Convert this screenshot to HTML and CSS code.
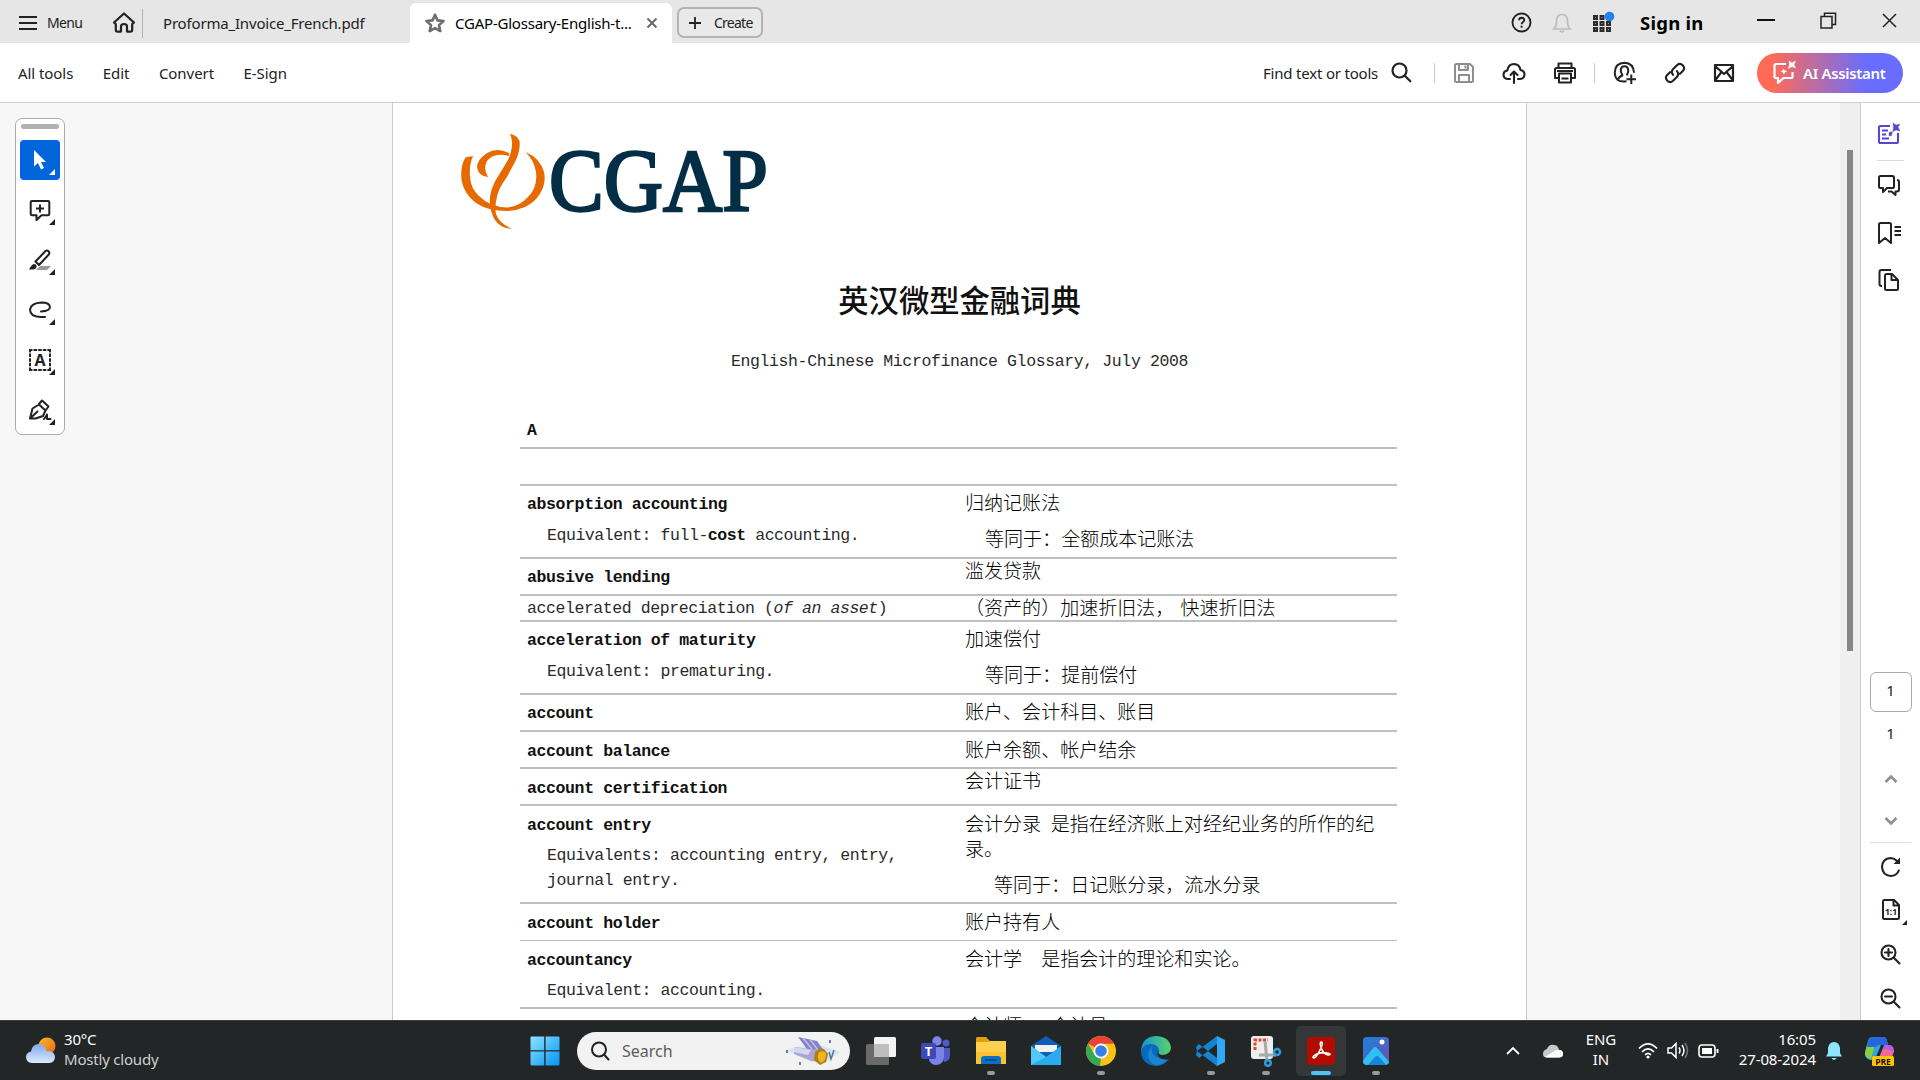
FILE: index.html
```html
<!DOCTYPE html>
<html lang="en">
<head>
<meta charset="utf-8">
<title>CGAP-Glossary-English-to-Chinese.pdf</title>
<link rel="stylesheet" href="styles.css">
</head>
<body>
<header class="tabbar">
  <div class="menu"><svg width="20" height="16" viewBox="0 0 20 16"><path d="M1 2h18M1 8h18M1 14h18" stroke="#222" stroke-width="2"/></svg><span>Menu</span></div>
  <svg class="home" width="24" height="21" viewBox="0 0 24 21" fill="none" stroke="#222" stroke-width="2.200" stroke-linejoin="round" stroke-linecap="round"><path d="M2 10.5 12 1.5l10 9-1.8 1.6V18q0 1.600-1.600 1.600H15v-5q0-2.600-3-2.600t-3 2.600v5H5.400q-1.600 0-1.600-1.600v-5.900z"/></svg>
  <div class="tab">Proforma_Invoice_French.pdf</div>
  <div class="tab tab-active">
    <svg width="20" height="20" viewBox="0 0 20 20" fill="none" stroke="#6e6e6e" stroke-width="2.600" stroke-linejoin="round"><path d="m10 1.800 2.500 5.600 6 .6-4.500 4.100 1.300 6L10 15.100l-5.300 3 1.300-6L1.500 8l6-.6z"/></svg>
    <span class="tab-name">CGAP-Glossary-English-t...</span>
    <svg width="12" height="12" viewBox="0 0 12 12" stroke="#6a6a6a" stroke-width="2.100"><path d="m1.500 1.500 9 9m0-9-9 9"/></svg>
  </div>
  <button class="create"><svg width="14" height="14" viewBox="0 0 14 14" stroke="#222" stroke-width="1.800"><path d="M7 1v12M1 7h12"/></svg><span>Create</span></button>
  <div class="account">
    <svg width="21" height="21" viewBox="0 0 21 21" fill="none" stroke="#222" stroke-width="1.900"><circle cx="10.500" cy="10.500" r="9"/><path d="M8 8.300q.2-2.600 2.700-2.600 2.500.1 2.500 2.300 0 1.400-1.500 2.300-1 .7-1 1.900M10.600 13.800v2"/></svg>
    <svg width="20" height="22" viewBox="0 0 20 22" fill="none" stroke="#bcbcbc" stroke-width="1.700"><path d="M2 17q2.500-2.500 2.500-8 0-6.500 5.500-6.500T15.500 9q0 5.500 2.500 8zM8 18.500q2 2.600 4 0"/></svg>
    <svg width="23" height="23" viewBox="0 0 23 23" fill="#999" stroke="#2b2b2b" stroke-width="2"><path d="M2 5h3v3H2zM8.500 5h3v3h-3zM15 5h3v3h-3zM2 11h3v3H2zM8.500 11h3v3h-3zM15 11h3v3h-3zM2 17h3v3H2zM8.500 17h3v3h-3zM15 17h3v3h-3z"/><circle cx="17.500" cy="5.500" r="4.800" fill="#2680eb" stroke="none"/></svg>
    <strong>Sign in</strong>
  </div>
  <div class="window-controls">
    <svg width="18" height="18" viewBox="0 0 18 18" stroke="#111" stroke-width="2"><path d="M0 9h18"/></svg>
    <svg width="17" height="17" viewBox="0 0 17 17" fill="none" stroke="#222" stroke-width="1.500"><path d="M1 4.500h11v11.500H1zM4.500 4V1.200h11v11.300H12.500"/></svg>
    <svg width="15" height="15" viewBox="0 0 15 15" stroke="#222" stroke-width="1.500"><path d="m1 1 13 13M14 1 1 14"/></svg>
  </div>
</header>

<nav class="toolbar">
  <div class="commands"><span>All tools</span><span>Edit</span><span>Convert</span><span>E-Sign</span></div>
  <div class="find"><span>Find text or tools</span>
    <svg width="21" height="21" viewBox="0 0 21 21" fill="none" stroke="#222" stroke-width="2.200" stroke-linecap="round"><circle cx="8.500" cy="8.500" r="7"/><path d="m13.800 13.800 5.500 5.500"/></svg></div>
  <div class="actions">
    <svg width="22" height="22" viewBox="0 0 22 22" fill="none" stroke="#8e8e8e" stroke-width="2" stroke-linejoin="round"><path d="M2 3.500Q2 2 3.500 2H17l3 3v13.500q0 1.500-1.500 1.500h-15Q2 20 2 18.500zM6 2v6h9V2M6 20v-7h10v7M12.500 3.500v3"/></svg>
    <svg width="24" height="24" viewBox="0 0 24 24" fill="none" stroke="#222" stroke-width="2.100" stroke-linecap="round" stroke-linejoin="round"><path d="M8 18H5.500Q1.500 17.500 1.500 13.500 1.700 10 5.300 9.500 6.500 3 12 3q5.500.2 6.500 6 4 .7 4 4.500-.3 4.200-4.500 4.500h-2M12 22V11M8.500 14 12 10.500l3.500 3.500"/></svg>
    <svg width="24" height="22" viewBox="0 0 24 22" fill="none" stroke="#222" stroke-width="2" stroke-linejoin="round"><path d="M5.500 6V1.500h13V6M5.500 16H2V7.500Q2 6 3.500 6h17Q22 6 22 7.500V16h-3.500M6 11.500h12v9H6zM4 9h16M8.500 16.500h7"/></svg>
  </div>
  <div class="actions share">
    <svg width="24" height="24" viewBox="0 0 24 24" fill="none" stroke="#222" stroke-width="2"><path d="M13.500 20.300Q2 22 1.800 11.500 2.200 2 11.500 1.700q9 .3 9.500 10M5.500 18q.5-2.500 3.500-3.200.8-.8 0-1.500Q7.500 11 7.800 8.500 8.500 5.300 11.500 5.300t3.700 3.200q.3 2.500-1 4.800v1.200M18.300 13.500v9.500M13.500 18.300H23"/></svg>
    <svg width="22" height="22" viewBox="0 0 22 22" fill="none" stroke="#222" stroke-width="2.100" stroke-linecap="round"><path d="M9 12.800Q6.600 9.600 9.200 7l4-4q2.800-2.300 5.500.3 2.600 2.700.3 5.500l-3 3M13 9.200q2.400 3.200-.2 5.800l-4 4q-2.800 2.300-5.500-.3-2.600-2.700-.3-5.500l3-3"/></svg>
    <svg width="22" height="20" viewBox="0 0 22 20" fill="none" stroke="#222" stroke-width="2.200" stroke-linejoin="round"><path d="M2 2h18v16H2zM2 3l9 8 9-8M2 17.500 8.500 9M20 17.500 13.500 9"/></svg>
  </div>
  <button class="assistant"><svg width="25" height="25" viewBox="0 0 25 25" fill="none" stroke="#fff" stroke-width="2.200" stroke-linejoin="round"><path d="M14 4H4Q2.500 4 2.500 5.500v11Q2.500 18 4 18h2v5l5.500-5H19q1.500 0 1.500-1.500V12"/><path d="m17 1 3 2 3.500-2-1.500 3.500 1.500 3.500-3.500-1.500-3.500 2 1-4zM11.500 9l1.200 1.700 2 .5-1.800 1-1 1.800-.9-1.800-2-.8 1.800-.7z" fill="#fff" stroke-width=".5"/></svg><span>AI Assistant</span></button>
</nav>

<main class="workspace">
  <div class="canvas-left">
    <div class="palette">
      <i class="handle"></i>
      <div class="tool selected"><svg width="16" height="22" viewBox="0 0 16 22" fill="#fff"><path d="M2 1v16.500l4-3.500 3 6.500 3-1.500-3-6h5z"/></svg></div>
      <div class="tool"><svg width="22" height="23" viewBox="0 0 22 23" fill="none" stroke="#222" stroke-width="2" stroke-linejoin="round"><path d="M3 2h16q1.300 0 1.300 1.300V15q0 1.300-1.300 1.300h-6.500L7.500 21v-4.700H3Q1.700 16.300 1.700 15V3.300Q1.700 2 3 2zM11 5.500v8M7 9.500h8"/></svg></div>
      <div class="tool"><svg width="24" height="22" viewBox="0 0 24 22" fill="none" stroke="#222" stroke-width="2" stroke-linejoin="round"><path d="M12 17h11l-4 4H8z" fill="#999" stroke="none"/><path d="M7.500 12.500 17.500 2q1.500-1 3 .3t.3 3.200L11 16z"/><path d="M6 15q3 .3 2.500 3-.5 2-3 2.500H1q2.500-5 5-5.500z" fill="#222" stroke="none"/></svg></div>
      <div class="tool"><svg width="24" height="20" viewBox="0 0 24 20" fill="none" stroke="#222" stroke-width="2" stroke-linecap="round"><path d="M13 11.500q9-.5 9-4.500-.5-4.500-8.500-4.500Q3 3 2 9.500q0 7 10.500 7.500h4.500"/></svg></div>
      <div class="tool"><svg width="24" height="24" viewBox="0 0 24 24"><path d="M1 2h22M1 22h22M2 1v22M22 1v22" stroke="#222" stroke-width="2" stroke-dasharray="3.500 1.100"/><text x="12" y="17.500" text-anchor="middle" class="type-glyph">A</text></svg></div>
      <div class="tool"><svg width="24" height="22" viewBox="0 0 24 22" fill="none" stroke="#222" stroke-width="2" stroke-linejoin="round" stroke-linecap="round"><path d="M2 19.500 4.500 9.500 11 5.500l6.500 6-2.500 5.500-7.500 2.500zM11 5l3-3.500 6.500 6-3 4M2.500 19l7-6.500M16 20q3-4 3-4.500V20h3.500"/></svg></div>
    </div>
  </div>

  <article class="page">
    <svg class="logo" width="320" height="125" viewBox="0 -10 320 125">
      <g fill="#e66a00">
        <path d="M55 4Q62 5 64.500 11 65.500 20 61 30L52 47Q43 59 42 67 39.500 76 41 84 44 93 57 99 45 98 40 90 34 80 35 67 36 58 42 48L53 30Q60 14 55 4z"/>
        <path d="M18 26 10.500 27.500Q5 36 6.500 50 9 64 21 73 33 81 52 81 72 80 82 68 92 56 89 42 85 28 70.500 22 79 30 81 42 83 57 73 67 64 77 52 77.500 35 77 24 66 16 59 15 47 14 35 18 26z"/>
        <path d="M54 23Q42 17 32 23 22 30 22 37 23 46 33 47 28 38 32 31 39 22 54 26z"/>
      </g>
      <text x="94" y="79.500" class="logo-text" textLength="219" lengthAdjust="spacingAndGlyphs">CGAP</text>
    </svg>
    <h1 lang="zh-CN">英汉微型金融词典</h1>
    <p class="subtitle">English-Chinese Microfinance Glossary, July 2008</p>
    <h2>A</h2>
    <div class="glossary">
      <div class="row blank"></div>
      <div class="row noted"><div class="en"><b>absorption accounting</b><p>Equivalent: full-<b>cost</b> accounting.</p></div><div class="zh" lang="zh-CN">归纳记账法<p>等同于：全额成本记账法</p></div></div>
      <div class="row raised"><div class="en"><b>abusive lending</b></div><div class="zh" lang="zh-CN">滥发贷款</div></div>
      <div class="row slim"><div class="en">accelerated depreciation (<em>of an asset</em>)</div><div class="zh" lang="zh-CN">（资产的）加速折旧法，<span class="half"> </span>快速折旧法</div></div>
      <div class="row noted"><div class="en"><b>acceleration of maturity</b><p>Equivalent: prematuring.</p></div><div class="zh" lang="zh-CN">加速偿付<p>等同于：提前偿付</p></div></div>
      <div class="row"><div class="en"><b>account</b></div><div class="zh" lang="zh-CN">账户、会计科目、账目</div></div>
      <div class="row low"><div class="en"><b>account balance</b></div><div class="zh" lang="zh-CN">账户余额、帐户结余</div></div>
      <div class="row low raised"><div class="en"><b>account certification</b></div><div class="zh" lang="zh-CN">会计证书</div></div>
      <div class="row low long"><div class="en"><b>account entry</b><p>Equivalents: accounting entry, entry,<br>journal entry.</p></div><div class="zh" lang="zh-CN">会计分录&ensp;是指在经济账上对经纪业务的所作的纪<br>录。<p>等同于：日记账分录，流水分录</p></div></div>
      <div class="row low thin"><div class="en"><b>account holder</b></div><div class="zh" lang="zh-CN">账户持有人</div></div>
      <div class="row low short"><div class="en"><b>accountancy</b><p>Equivalent: accounting.</p></div><div class="zh" lang="zh-CN">会计学&emsp;是指会计的理论和实论。</div></div>
      <div class="row"><div class="en"></div><div class="zh" lang="zh-CN">会计师&emsp;&ensp;会计员</div></div>
    </div>
  </article>

  <div class="canvas-right"></div>
  <div class="scroll"><i></i></div>

  <aside class="side">
    <div class="panels">
      <svg width="24" height="24" viewBox="0 0 24 24" fill="none" stroke="#5548ce" stroke-width="2.100" stroke-linejoin="round"><path d="M13 4H3.500Q2 4 2 5.500v14Q2 21 3.500 21h16q1.500 0 1.500-1.500V11M5 8.500h6M5 12.500h4M5 16.500h7"/><path d="m16 1 3 2 4-1-2 3 2 4-4-1-3 1.500.5-4zM12 10.500l3.500-1-1 4-2.500.5z" fill="#5548ce" stroke-width=".4"/></svg>
      <hr>
      <svg width="24" height="24" viewBox="0 0 24 24" fill="none" stroke="#222" stroke-width="2" stroke-linejoin="round"><path d="M3.500 2h12Q17 2 17 3.500v9q0 1.500-1.500 1.500H10l-4 4v-4H3.500Q2 14 2 12.500v-9Q2 2 3.500 2zM20 6q2 0 2 2v7.500q0 2-2 2h-1.500V21l-4-3.500H11"/></svg>
      <svg width="24" height="24" viewBox="0 0 24 24" fill="none" stroke="#222" stroke-width="2" stroke-linejoin="round"><path d="M3.500 2h9Q14 2 14 3.500V22l-6-5-6 5V3.500Q2 2 3.500 2zM17.500 6H24M17.500 10H24M17.500 14H24"/></svg>
      <svg width="24" height="24" viewBox="0 0 24 24" fill="none" stroke="#222" stroke-width="2" stroke-linejoin="round"><path d="M9.500 6H15l6 6v8.500q0 1.500-1.500 1.500h-10Q8 22 8 20.500v-13Q8 6 9.500 6zM14.500 6v6H21M5 18H4.500Q2.500 18 2.500 16V4Q2.500 2 4.500 2H14"/></svg>
    </div>
    <div class="paging">
      <span class="page-current">1</span>
      <span class="page-total">1</span>
      <svg width="14" height="10" viewBox="0 0 14 10" fill="none" stroke="#909090" stroke-width="2.600"><path d="M1.500 8 7 2.500 12.500 8"/></svg>
      <svg width="14" height="10" viewBox="0 0 14 10" fill="none" stroke="#909090" stroke-width="2.600"><path d="M1.500 2 7 7.500 12.500 2"/></svg>
      <hr>
      <svg width="22" height="22" viewBox="0 0 22 22" fill="none" stroke="#222" stroke-width="2.100" stroke-linecap="round"><path d="M17 5Q14.500 2.200 10.500 2 2.500 2.500 2 11q.5 8 8.500 9 6.500-.3 8.300-5.500"/><path d="M20 1.500V8h-6.500z" fill="#222" stroke="none"/></svg>
      <div class="fit"><svg width="20" height="22" viewBox="0 0 20 22" fill="none" stroke="#222" stroke-width="2" stroke-linejoin="round"><path d="M3.500 2H13l5 5v12.500q0 1.500-1.500 1.500h-13Q2 21 2 19.500v-16Q2 2 3.500 2zM12.500 2v5.500H18"/><text x="10" y="17" text-anchor="middle" class="fit-glyph">1:1</text></svg></div>
      <svg width="21" height="21" viewBox="0 0 21 21" fill="none" stroke="#222" stroke-width="2.100" stroke-linecap="round"><circle cx="8.500" cy="8.500" r="7"/><path d="m13.800 13.800 5.700 5.700M5 8.500h7M8.500 5v7"/></svg>
      <svg width="21" height="21" viewBox="0 0 21 21" fill="none" stroke="#222" stroke-width="2.100" stroke-linecap="round"><circle cx="8.500" cy="8.500" r="7"/><path d="m13.800 13.800 5.700 5.700M5 8.500h7"/></svg>
    </div>
  </aside>
</main>

<footer class="taskbar">
  <div class="weather">
    <svg width="31" height="27" viewBox="0 0 31 27"><defs><linearGradient id="sun" x1="0" y1="0" x2="1" y2="1"><stop stop-color="#fbb72c"/><stop offset="1" stop-color="#ee6515"/></linearGradient><linearGradient id="cloud" x1="0" y1="0" x2="0" y2="1"><stop stop-color="#7fa9ee"/><stop offset="1" stop-color="#dbe9fb"/></linearGradient></defs><circle cx="22" cy="9" r="8.500" fill="url(#sun)"/><path d="M7 26q-6-.5-6-6 0-4.500 5-5.500Q7 7 14 7q6.500.5 7.500 7.500 8-1 8.500 5.500 0 5.500-6 6z" fill="url(#cloud)"/></svg>
    <div class="forecast"><div>30°C</div><div class="dim">Mostly cloudy</div></div>
  </div>
  <svg class="start" width="30" height="30" viewBox="0 0 30 30"><defs><linearGradient id="win" x1="0" y1="0" x2="1" y2="1"><stop stop-color="#8be4ff"/><stop offset="1" stop-color="#0594f5"/></linearGradient></defs><path d="M1.500.5H14.200v13.700H.5V1.500q0-1 1-1zM15.600.5h12.900q1 0 1 1v12.700H15.600zM.5 15.600h13.700v13.900H1.500q-1 0-1-1zM15.600 15.600h13.900v12.900q0 1-1 1H15.600z" fill="url(#win)"/></svg>
  <div class="search">
    <svg width="20" height="20" viewBox="0 0 20 20" fill="none" stroke="#222" stroke-width="2" stroke-linecap="round"><circle cx="9" cy="8.500" r="7"/><path d="m14 13.500 4.500 5"/></svg>
    <span>Search</span>
    <svg width="58" height="30" viewBox="0 0 58 30"><path d="m0 15 10-4 25-2 20 7-12 9-20-3z" fill="#d2e6f4"/><path d="m13 1 19 4 7 10-17-2z" fill="#8583c4"/><path d="m18 2 9 11M25 3.500 33 14" stroke="#c0bfe6" stroke-width="1.500"/><path d="m9 11 24 3 6 5-5 7-8-1-17-7z" fill="#aaa7d4"/><path d="m9 11 17 3-3 5-14-3z" fill="#d8d5ee"/><path d="M30 16q4-4 9-3l4 5-2 8-6 3-6-5z" fill="#b27d12"/><path d="M34 16q6-2 7 2 0 7-5 9-5-4-2-11z" fill="#eeb721"/><path d="m44 16 2 7 3-9" fill="none" stroke="#5e7393" stroke-width="1.500"/><path d="M2 14v3M45 4v3M15 26v3" stroke="#6682ab" stroke-width="2"/></svg>
  </div>
  <div class="apps">
    <div class="app"><svg width="32" height="30" viewBox="0 0 32 30"><rect x="9" y="1" width="22" height="20" rx="1.500" fill="#f3f3f3"/><rect x="1" y="8" width="23" height="21" rx="1.500" fill="#777" opacity=".85"/><path d="M9 8h15v13H9z" fill="#bebebe"/></svg></div>
    <div class="app"><svg width="32" height="30" viewBox="0 0 32 30"><circle cx="17" cy="5" r="4.700" fill="#7d84ee"/><circle cx="26" cy="7" r="3.500" fill="#5059c9"/><path d="M20 12h10v8q0 5-6 6z" fill="#5059c9"/><path d="M10 11h14v10q-1 8-8 8-5 0-7-5z" fill="#7b83eb"/><rect x="1" y="7" width="15" height="16" rx="2" fill="#4048b4"/><text x="8.500" y="19.500" text-anchor="middle" class="teams-glyph">T</text></svg></div>
    <div class="app run"><svg width="32" height="30" viewBox="0 0 32 30"><path d="M2 1h9l4 4h15v10H1V2z" fill="#e0a20c"/><path d="M1 6h12l3-1h15v23H1z" fill="#ffd04c"/><path d="M1 16h30v12H1z" fill="#fbc32f"/><path d="M6 28v-5q0-3 3-3h14q3 0 3 3v5z" fill="#0873c5"/><path d="M10 24h12" stroke="#063b6c" stroke-width="1.500"/></svg></div>
    <div class="app"><svg width="32" height="30" viewBox="0 0 32 30"><path d="M1 10 16 0l15 10-15 12z" fill="#0b5fb5"/><path d="M5 9h22v7H5z" fill="#f1f1f1"/><path d="m1 10 15 11L31 10v19H1z" fill="#2aabf0"/><path d="m1 10 15 11L1 29z" fill="#52c7fa"/></svg></div>
    <div class="app run"><svg width="32" height="32" viewBox="0 0 32 32"><circle cx="16" cy="16" r="15" fill="#fbc116"/><path d="M16 16 3 8.500A15 15 0 0 1 29 8.500L16 9z" fill="#ea4335"/><path d="M3 8.500 9.500 20 16 23l-1 8A15 15 0 0 1 3 8.500z" fill="#34a853"/><circle cx="16" cy="16" r="7.500" fill="#fff"/><circle cx="16" cy="16" r="5.800" fill="#397ee8"/></svg></div>
    <div class="app"><svg width="32" height="32" viewBox="0 0 32 32"><defs><linearGradient id="edge" x1="0" y1="0" x2="1" y2="0"><stop stop-color="#1595d7"/><stop offset="1" stop-color="#59d368"/></linearGradient></defs><path d="M1 18Q1 1 17 1q13 1 14 12-1 7-9 7-5-1-3-4-2-6-9-5-7 1-9 7z" fill="url(#edge)"/><path d="M1 17Q3 8 12 9q6 1 7 6-3 4 0 7 4 4 10 2-5 7-13 7Q2 30 1 17z" fill="#0b69bd"/><path d="M12 11q-3 12 15 14-7 7-14 4-9-7-1-18z" fill="#1b85d0"/></svg></div>
    <div class="app run"><svg width="32" height="32" viewBox="0 0 32 32"><path d="M22 1v8L4 23l-3-3 1-4zM22 31v-8L4 9l-3 3 1 4z" fill="#1583cd"/><path d="m22 1 8 4v22l-8 4z" fill="#31a9f2"/></svg></div>
    <div class="app run"><svg width="32" height="32" viewBox="0 0 32 32"><rect x="1" y="1" width="22" height="23" rx="3" fill="#eee"/><path d="M5 15V5h13" fill="none" stroke="#dd4b2a" stroke-width="3" stroke-dasharray="3 1.500"/><path d="m15 6 2 20M9 20h17" stroke="#a9a9a9" stroke-width="3"/><circle cx="27" cy="17" r="3" fill="none" stroke="#2c9ede" stroke-width="2.500"/><circle cx="18" cy="28" r="2.800" fill="none" stroke="#2c9ede" stroke-width="2.500"/></svg></div>
    <div class="app run active"><svg width="28" height="28" viewBox="0 0 28 28"><rect width="28" height="28" rx="4" fill="#b30b00"/><path d="M14 5q3 0-1 8-4 8-6 8-3-1 3-4 6-2 10-1 5 1 2 2-4 0-7-5-3-7-1-8z" fill="none" stroke="#fff" stroke-width="1.600"/></svg></div>
    <div class="app run"><svg width="28" height="28" viewBox="0 0 28 28"><defs><linearGradient id="photo" x1="0" y1="0" x2="1" y2="1"><stop stop-color="#1685df"/><stop offset="1" stop-color="#744bac"/></linearGradient><clipPath id="photo-frame"><rect x="1" width="26" height="28" rx="4"/></clipPath></defs><g clip-path="url(#photo-frame)"><path d="M0 0h28v28H0z" fill="url(#photo)"/><path d="m0 25 11-14q2-2 4 0l13 15v4H0z" fill="#31bff1"/><path d="m6 28 7-8q2-2 4 0l8 9z" fill="#1684dd"/></g><circle cx="20" cy="5" r="2.500" fill="#fff"/></svg></div>
  </div>
  <div class="tray">
    <svg class="up" width="14" height="9" viewBox="0 0 14 9" fill="none" stroke="#fff" stroke-width="1.800"><path d="m1 8 6-6 6 6"/></svg>
    <svg class="onedrive" width="22" height="14" viewBox="0 0 22 14"><path d="M1 10Q1 6 5 5q2-5 7-4 4 0 5 5 4 0 4 4 0 3-4 3.500H5Q1 13.500 1 10z" fill="#c8c8c8"/><path d="m3 13 11-7q7-1 7 4 0 3.500-4 3.500H5z" fill="#fff"/></svg>
    <div class="language">ENG<br>IN</div>
    <svg class="wifi" width="20" height="17" viewBox="0 0 20 17" fill="none" stroke="#fff" stroke-width="1.700"><path d="M1 6.500q9-9 18 0M4 9.800q6-6 12 0M7 12.800q3-3 6 0"/><circle cx="10" cy="15" r="1.600" fill="#fff" stroke="none"/></svg>
    <svg class="volume" width="22" height="17" viewBox="0 0 22 17" fill="none" stroke="#fff" stroke-width="1.500"><path d="M1 6v5h3.500L9 15.500v-14L4.500 6zM12 5.500q2 3 0 6M15 3q4 5.500 0 11"/><path d="M18 1q5 7.500 0 15" stroke="#777"/></svg>
    <svg class="battery" width="21" height="14" viewBox="0 0 21 14" fill="none" stroke="#fff" stroke-width="1.600"><rect x="1" y="1" width="16" height="12" rx="3"/><rect x="4" y="4" width="10" height="6" fill="#fff" stroke="none"/><path d="M19.500 5v4" stroke-width="2"/></svg>
    <div class="clock">16:05<br>27-08-2024</div>
    <svg class="bell" width="18" height="20" viewBox="0 0 18 20" fill="#8ce5fb"><path d="M1 15.500 3 12V7q1-6 6-6t6 6v5l2 3.500zM6.500 17h5q-2.500 4-5 0z"/></svg>
    <svg class="copilot" width="31" height="30" viewBox="0 0 31 30"><path d="M9 1h11q2 0 3 4l1 4h-7l-5 12-2 3H6Q0 22 1 16L4 5q1-4 5-4z" fill="#29a4df"/><path d="M3 9h8L7 23q-6-1-6-6z" fill="#8bce45"/><path d="M9 1h11q2 0 3 4l1 4h-9l-4 2H3l2-7q1-3 4-3z" fill="#2667df"/><path d="M20 9h6q4 1 4 6l-2 7H15z" fill="#b35fe0"/><path d="m19 13-4 9h12l3-7z" fill="#f26a94"/><rect x="8" y="20" width="22" height="10" rx="1.500" fill="#ffc400"/><text x="19" y="28.500" text-anchor="middle" class="pre-glyph">PRE</text></svg>
  </div>
</footer>
</body>
</html>
```
FILE: styles.css
```css
* { box-sizing: border-box; }
body { margin: 0; width: 1920px; height: 1080px; overflow: hidden; display: flex; flex-direction: column; font-family: "Noto Sans", "Open Sans", sans-serif; font-size: 15px; color: #222; background: #fff; }
svg { display: block; flex: none; }
button { font: inherit; padding: 0; }
span, strong { white-space: nowrap; }
h1, h2, p, hr { margin: 0; }

.tabbar { height: 43px; flex: none; display: flex; align-items: center; background: #e6e6e6; }
.menu { width: 112px; padding: 2px 0 0 18px; display: flex; align-items: center; gap: 9px; font-size: 14px; letter-spacing: -.7px; }
.home { margin-top: 2px; }
.tab { width: 268px; height: 29px; margin: 4px 0 0 6px; padding-left: 20px; border-left: 1px solid #b1b1b1; line-height: 28px; font-size: 15px; letter-spacing: -.18px; }
.tab-active { width: 262px; height: 40px; margin: 3px 0 0; padding: 0 14px 0 15px; border: 0; border-radius: 6px 6px 0 0; background: #fff; color: #000; display: flex; align-items: center; line-height: 40px; letter-spacing: -.22px; }
.tab-name { margin: 0 auto 1px 10px; }
.create { width: 86px; height: 31px; margin: 2px 0 0 5px; border: 2px solid #b3b3b3; border-radius: 7px; background: #e9e9e9; color: #222; display: flex; align-items: center; padding-left: 9px; gap: 12px; font-size: 14px; letter-spacing: -.75px; }
.account { margin: 2px 0 0 748px; display: flex; align-items: center; gap: 20px; }
.account strong { font-size: 18.500px; font-weight: 700; color: #000; width: 64px; margin: 0 0 0 5px; letter-spacing: .25px; }
.window-controls { display: flex; align-items: center; margin: 0 23px 3px auto; gap: 45px; }

.toolbar { height: 60px; flex: none; border-bottom: 1px solid #cfcfcf; display: flex; align-items: center; padding-left: 18px; }
.commands { display: flex; gap: 29.500px; width: 1245px; letter-spacing: -.06px; }
.find { width: 171px; display: flex; align-items: center; gap: 13px; letter-spacing: -.2px; }
.actions { height: 20px; border-left: 1px solid #ccc; display: flex; align-items: center; gap: 27px; padding-left: 18px; width: 160px; }
.share { width: 163px; gap: 27px; }
.assistant { width: 146px; height: 40px; border: 0; border-radius: 20px; background: linear-gradient(90deg, #ff6b57 10%, #686dff 75%); color: #fff; display: flex; align-items: center; padding-left: 15px; gap: 6px; font-size: 15px; font-weight: 600; letter-spacing: -.35px; }

.workspace { flex: 1; min-height: 0; display: flex; overflow: hidden; }
.canvas-left { width: 392px; flex: none; background: #f7f7f7; padding: 15px 0 0 15px; }
.palette { width: 50px; height: 317px; border: 1px solid #acacac; border-radius: 7px; background: #fff; padding: 5px 4px; display: flex; flex-direction: column; gap: 10px; }
.handle { height: 5px; flex: none; margin: 0 1px 1px; border-radius: 3px; background: #b1b1b1; }
.tool { height: 40px; flex: none; border-radius: 4px; display: flex; align-items: center; justify-content: center; position: relative; }
.tool::after { content: ""; position: absolute; right: 5px; bottom: 5px; border-left: 6px solid transparent; border-bottom: 6px solid #222; }
.selected { background: #0265dc; }
.selected::after { border-bottom-color: #fff; }
.type-glyph { font: 700 16px "Open Sans", sans-serif; fill: #222; }

.page { width: 1135px; flex: none; border: solid #c9c9c9; border-width: 0 1px; overflow: hidden; color: #2a2a2a; font-family: "Liberation Mono", monospace; font-size: 16.500px; letter-spacing: -.38px; line-height: 25px; }
.page b { color: #111; }
.logo { margin: 17px 0 0 62px; }
.logo-text { font: 88px "Liberation Serif", serif; fill: #042e45; stroke: #042e45; stroke-width: 2.600; letter-spacing: 0; }
h1 { margin-top: 34px; text-align: center; font: 500 30.300px/40px "Noto Sans CJK SC", sans-serif; letter-spacing: 0; color: #111; }
.subtitle { margin-top: 29.500px; text-align: center; }
h2 { margin: 43.500px 129px 0 127px; height: 32px; padding: 1px 0 0 7px; border-bottom: 2px solid #bfbfbf; font-size: 16.500px; font-weight: 700; line-height: 25px; color: #111; }
.glossary { margin: 0 129px 0 127px; }
.row { height: 37px; display: grid; grid-template-columns: 445px 1fr; border-bottom: 2px solid #bfbfbf; }
.en { padding: 6px 0 0 7px; white-space: nowrap; }
.en p { margin: 6px 0 0 20px; letter-spacing: -.44px; }
.zh { padding-top: 3px; color: #000; font-family: "Noto Sans CJK SC", sans-serif; font-size: 19.050px; font-weight: 300; letter-spacing: 0; white-space: nowrap; }
.zh p { margin: 11px 0 0 20px; }
.half { display: inline-block; width: 6px; }
.noted { height: 73px; }
.slim { height: 26px; }
.slim .en { padding-top: 0; letter-spacing: -.42px; }
.low .en { padding-top: 7px; }
.low .zh { padding-top: 4px; }
.slim .zh, .row.raised .zh { padding-top: 0; margin-top: -2px; }
.long { height: 98px; }
.long .en p { margin-top: 5px; }
.long .zh p { margin-left: 29px; }
.thin { border-bottom-width: 1px; }
.short { height: 68px; }
.short .en p { margin-top: 5px; }

.canvas-right { flex: 1; background: #f7f7f7; }
.scroll { width: 20px; background: #efefef; padding: 47px 7px 0; }
.scroll i { display: block; height: 501px; background: #868686; }
.side { width: 60px; flex: none; border-left: 1px solid #ccc; display: flex; flex-direction: column; justify-content: space-between; }
.side hr { border: 0; border-top: 1px solid #dcdcdc; width: 27px; }
.panels { padding: 19px 0 0 16px; display: flex; flex-direction: column; }
.panels hr { margin: 14px 0 13px; }
.panels hr + svg, .panels hr + svg + svg { margin-bottom: 23px; }
.paging { height: 348px; display: flex; flex-direction: column; align-items: center; }
.page-current { width: 42px; height: 40px; flex: none; border: 1px solid #aaa; border-radius: 6px; text-align: center; line-height: 35px; }
.page-total { line-height: 22px; margin: 10px 0 30px; }
.paging svg + svg { margin-top: 32px; }
.side .paging hr { width: 41px; margin: 16px 0 13px; }
.fit { margin: 20px 0 24px; position: relative; }
.fit::after { content: ""; position: absolute; right: -6px; bottom: -5px; border-left: 5px solid transparent; border-bottom: 5px solid #222; }
.paging .fit + svg + svg { margin-top: 23px; }
.fit-glyph { font: 700 8.500px "Open Sans", sans-serif; fill: #222; stroke: none; }

.taskbar { height: 60px; flex: none; display: flex; align-items: center; background: #232627; border-top: 1px solid #3b3e3e; color: #fff; }
.weather { width: 530px; padding-left: 25px; display: flex; align-items: center; gap: 8px; font-size: 15px; line-height: 20px; letter-spacing: -.2px; }
.forecast, .language, .clock { margin-bottom: 4px; }
.dim { color: #d0d0d0; }
.search { width: 273px; height: 38px; margin-left: 17px; border-radius: 19px; background: #f2f2f2; color: #5c5c5c; display: flex; align-items: center; padding: 0 7px 0 13px; font-size: 16px; }
.search span { margin: 0 auto 0 12px; }
.apps { display: flex; margin-left: 3px; }
.app { width: 55px; height: 50px; padding-top: 1px; display: flex; align-items: center; justify-content: center; position: relative; border-radius: 5px; }
.run::after { content: ""; position: absolute; left: 24px; bottom: 1px; width: 8px; height: 4px; border-radius: 2px; background: #999; }
.active { width: 50px; margin: 0 2px 0 3px; background: #343737; }
.active::after { left: 15px; width: 20px; background: #4cc2ff; }
.teams-glyph { font: 700 13px "Open Sans", sans-serif; fill: #fff; }
.tray { flex: 1; display: flex; align-items: center; font-size: 15px; line-height: 20px; letter-spacing: -.1px; }
.up { margin-left: 103px; }
.onedrive { margin-left: 22px; }
.language { width: 32px; text-align: center; margin-left: 21px; flex: none; }
.wifi { margin-left: 21px; }
.volume { margin-left: 9px; }
.battery { margin-left: 9px; }
.clock { width: 97px; text-align: right; white-space: nowrap; }
.bell { margin-left: 9px; }
.copilot { margin-left: 21px; }
.pre-glyph { font: 700 8.500px "Open Sans", sans-serif; fill: #111; letter-spacing: 0; }
```
